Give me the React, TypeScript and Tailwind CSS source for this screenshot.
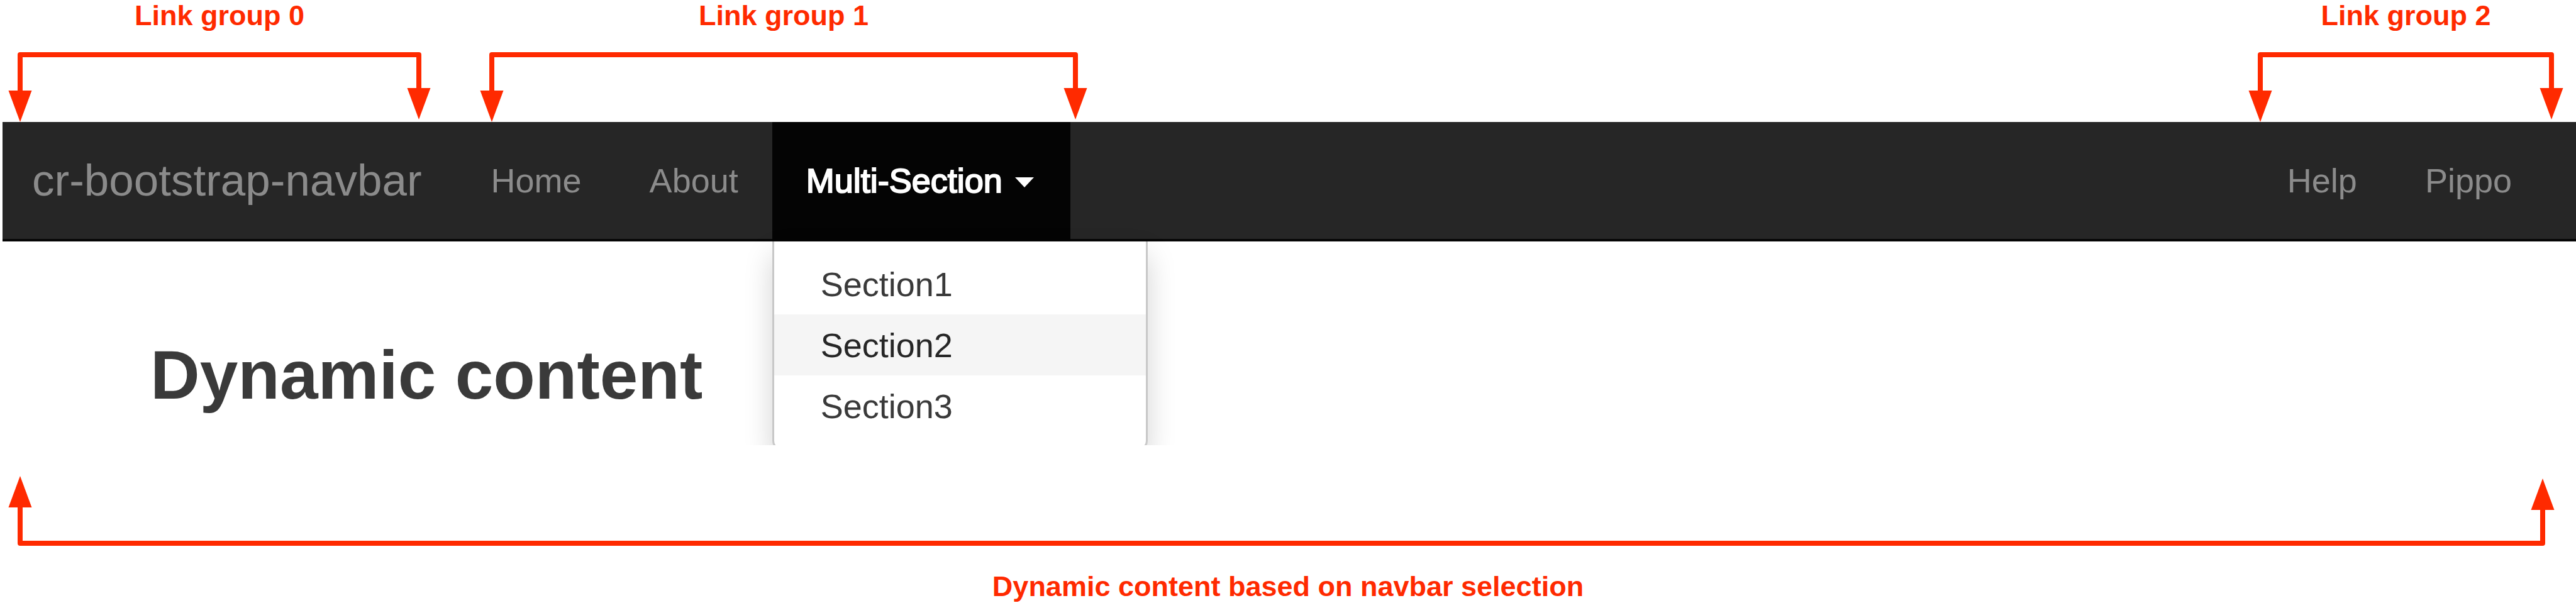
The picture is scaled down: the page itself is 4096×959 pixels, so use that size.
import type { ReactNode } from "react";

const RED = "#ff2a00";

function Corner({ end, up }: { end?: boolean; up?: boolean }) {
  const path = end ? "M0 4H19V70" : "M38 4H19V70";
  const head = end ? "M0.5 57H37.5L19 107Z" : "M0.5 61H37.5L19 111Z";
  return (
    <svg
      className={up ? "block shrink-0 -scale-y-100" : "block shrink-0"}
      width="38"
      height="111"
      viewBox="0 0 38 111"
      aria-hidden="true"
    >
      <path d={path} fill="none" stroke={RED} strokeWidth="8" strokeLinejoin="round" />
      <path d={head} fill={RED} />
    </svg>
  );
}

function Bracket({ up }: { up?: boolean }) {
  return (
    <div className={up ? "flex items-end" : "flex items-start"}>
      <Corner up={up} />
      <div className="h-[8px] flex-1 bg-[#ff2a00]" />
      <Corner up={up} end />
    </div>
  );
}

function Label({ children }: { children: ReactNode }) {
  return (
    <p className="text-center text-[45px] leading-[50px] font-bold whitespace-nowrap text-[#ff2a00]">
      {children}
    </p>
  );
}

function Group({ label, className }: { label: string; className: string }) {
  return (
    <div className={`flex flex-col gap-[33px] ${className}`}>
      <Label>{label}</Label>
      <Bracket />
    </div>
  );
}

function NavLink({ children }: { children: ReactNode }) {
  return (
    <li className="flex">
      <a href="#" className="flex items-center px-[54px] text-[#8b8b8b]">
        {children}
      </a>
    </li>
  );
}

const sections = ["Section1", "Section2", "Section3"];

export default function App() {
  return (
    <div className="bg-white font-['Liberation_Sans',Arial,sans-serif]">
      <div className="flex pr-[20px] pl-[13px]">
        <Group label="Link group 0" className="w-[672px]" />
        <Group label="Link group 1" className="ml-[78px] w-[966px]" />
        <Group label="Link group 2" className="ml-auto w-[501px]" />
      </div>

      <div className="overflow-hidden">
        <nav className="relative z-10 ml-[4px] flex h-[190px] border-b-4 border-[#060606] bg-[#262626] pr-[48px] pl-[47px] text-[54px] leading-[60px]">
          <a href="#" className="flex items-center pr-[56px] text-[71px] leading-[80px] text-[#8b8b8b]">
            cr-bootstrap-navbar
          </a>
          <ul className="flex">
            <NavLink>Home</NavLink>
            <NavLink>About</NavLink>
            <li className="relative flex">
              <button
                type="button"
                aria-haspopup="true"
                aria-expanded="true"
                className="-mb-[4px] flex w-[474px] items-center gap-[20px] bg-[#040404] pb-[4px] pl-[54px] text-white [-webkit-text-stroke:2px_white]"
              >
                Multi-Section
                <svg width="30" height="16" viewBox="0 0 30 16" aria-hidden="true" className="mt-[6px]">
                  <path d="M0 0H30L15 16Z" fill="#fff" />
                </svg>
              </button>
              <div className="absolute top-[190px] left-0 h-[324px] w-[700px]">
                <ul className="w-[597px] rounded-b-[15px] border-x-3 border-b-3 border-[#c8c8c8] bg-white py-[19px] shadow-[0_22px_45px_rgba(0,0,0,0.175)]">
                  {sections.map((name) => (
                    <li key={name}>
                      <a
                        href="#"
                        className={
                          name === "Section2"
                            ? "flex h-[97px] items-center bg-[#f5f5f5] pl-[74px] text-[#262626]"
                            : "flex h-[97px] items-center pl-[74px] text-[#3a3a3a]"
                        }
                      >
                        {name}
                      </a>
                    </li>
                  ))}
                </ul>
              </div>
            </li>
          </ul>
          <ul className="ml-auto flex">
            <NavLink>Help</NavLink>
            <NavLink>Pippo</NavLink>
          </ul>
        </nav>
        <main className="h-[324px] pt-[152px] pl-[239px]">
          <h1 className="text-[109px] leading-[120px] font-bold text-[#3a3a3a]">Dynamic content</h1>
        </main>
      </div>

      <div className="flex flex-col gap-[40px] pt-[49px]">
        <div className="pr-[34px] pl-[13px]">
          <Bracket up />
        </div>
        <Label>Dynamic content based on navbar selection</Label>
      </div>
    </div>
  );
}
